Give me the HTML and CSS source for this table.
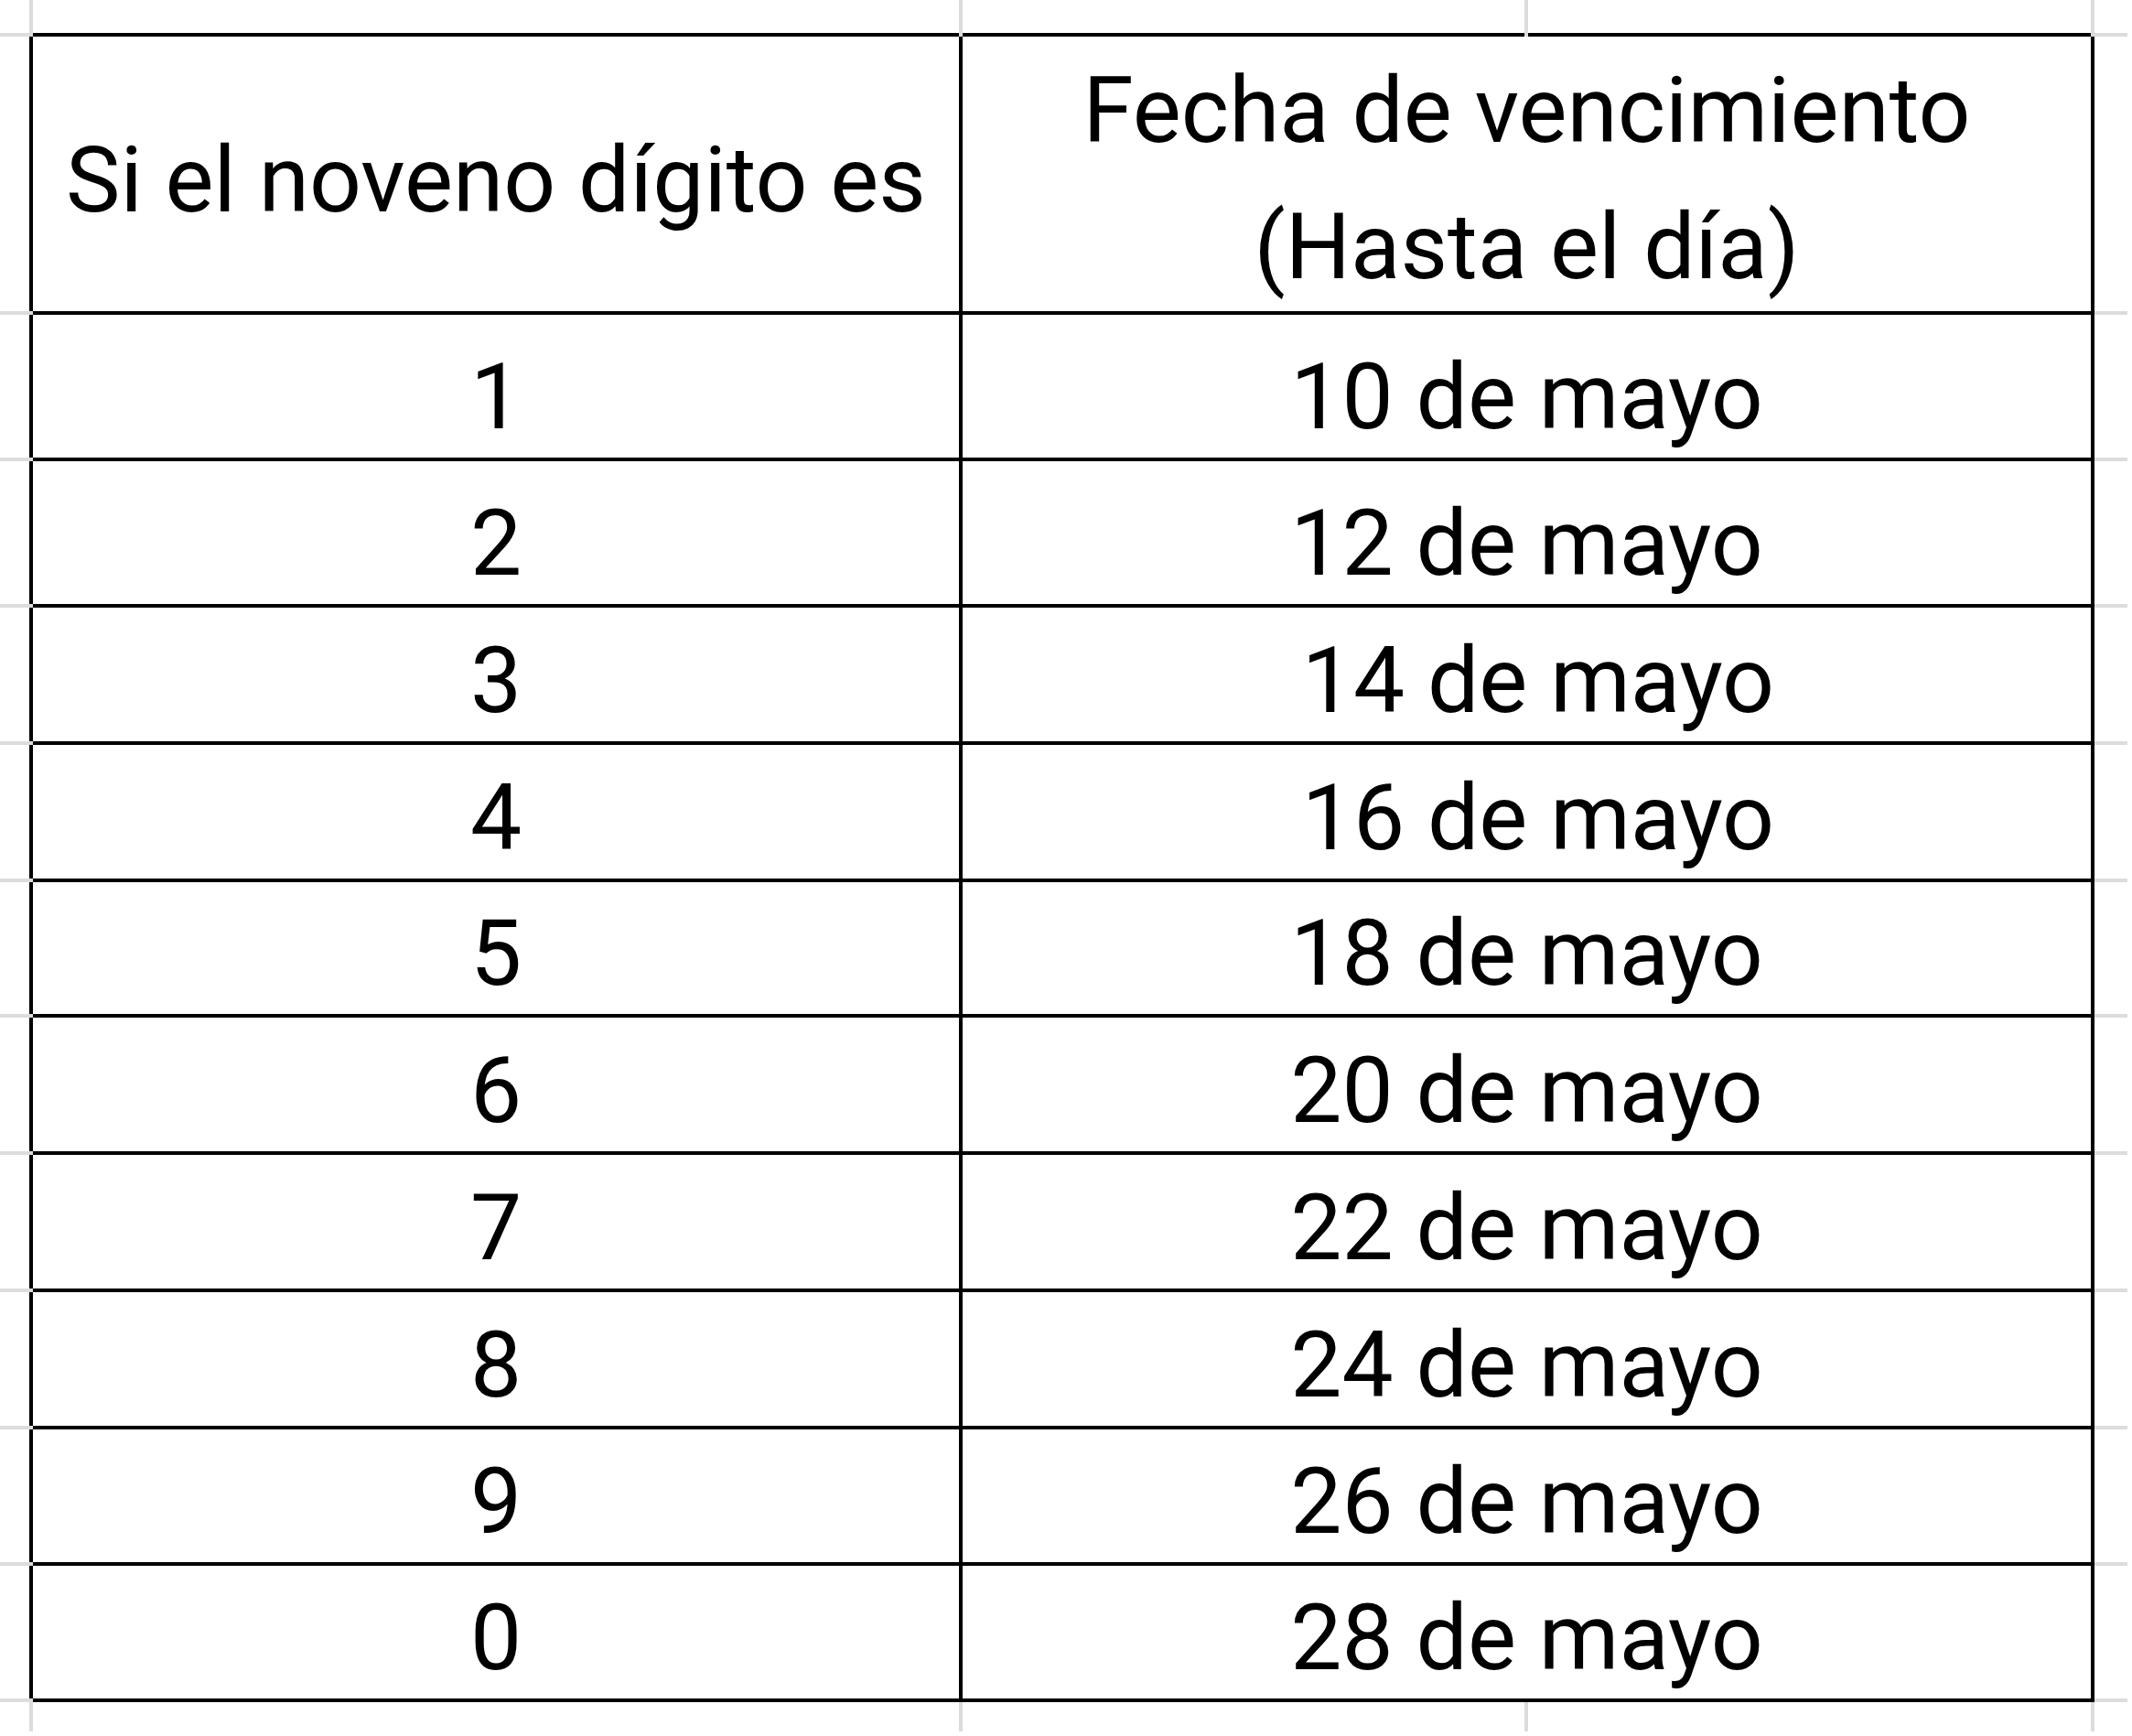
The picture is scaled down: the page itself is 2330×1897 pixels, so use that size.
FILE: index.html
```html
<!DOCTYPE html>
<html lang="es">
<head>
<meta charset="utf-8">
<title>Fechas de vencimiento</title>
<link rel="stylesheet" href="styles.css">
</head>
<body>
<table class="sheet">
  <colgroup>
    <col class="col-gutter">
    <col class="col-a">
    <col class="col-b">
    <col class="col-c">
    <col class="col-gutter-r">
  </colgroup>
  <tr class="row-edge-top">
    <td class="stub"></td><td class="grid-v"></td><td class="grid-v"></td><td class="grid-v grid-v-last"></td><td class="stub"></td>
  </tr>
  <tr class="row-head">
    <td class="stub"></td>
    <td class="cell head-a">Si el noveno dígito es</td>
    <td class="cell head-b" colspan="2"><div class="head-lines">Fecha de vencimiento<br>(Hasta el día)</div></td>
    <td class="stub"></td>
  </tr>
  <tr class="row-tall"><td class="stub"></td><td class="cell">1</td><td class="cell" colspan="2">10 de mayo</td><td class="stub"></td></tr>
  <tr class="row-tall"><td class="stub"></td><td class="cell">2</td><td class="cell" colspan="2">12 de mayo</td><td class="stub"></td></tr>
  <tr class="row-150"><td class="stub"></td><td class="cell">3</td><td class="cell" colspan="2"> 14 de mayo</td><td class="stub"></td></tr>
  <tr class="row-150"><td class="stub"></td><td class="cell">4</td><td class="cell" colspan="2"> 16 de mayo</td><td class="stub"></td></tr>
  <tr class="row-148"><td class="stub"></td><td class="cell">5</td><td class="cell" colspan="2">18 de mayo</td><td class="stub"></td></tr>
  <tr class="row-150"><td class="stub"></td><td class="cell">6</td><td class="cell" colspan="2">20 de mayo</td><td class="stub"></td></tr>
  <tr class="row-150"><td class="stub"></td><td class="cell">7</td><td class="cell" colspan="2">22 de mayo</td><td class="stub"></td></tr>
  <tr class="row-150"><td class="stub"></td><td class="cell">8</td><td class="cell" colspan="2">24 de mayo</td><td class="stub"></td></tr>
  <tr class="row-149"><td class="stub"></td><td class="cell">9</td><td class="cell" colspan="2">26 de mayo</td><td class="stub"></td></tr>
  <tr class="row-149"><td class="stub"></td><td class="cell">0</td><td class="cell" colspan="2">28 de mayo</td><td class="stub"></td></tr>
  <tr class="row-edge-bottom">
    <td></td><td class="grid-v"></td><td class="grid-v"></td><td class="grid-v grid-v-last"></td><td></td>
  </tr>
</table>
</body>
</html>
```
FILE: styles.css
```css
html, body {
  margin: 0;
  padding: 0;
  background: #ffffff;
}

.sheet {
  border-collapse: collapse;
  table-layout: fixed;
  width: 2325px;
  font-family: Roboto, "Liberation Sans", sans-serif;
  font-size: 100px;
  color: #000000;
}

.col-gutter { width: 34px; }
.col-a { width: 1016px; }
.col-b { width: 618px; }
.col-c { width: 619px; }
.col-gutter-r { width: 38px; }

.sheet td {
  padding: 0;
}

/* spreadsheet gridlines outside the bordered table */
.stub {
  border-bottom: 4px solid #dcdcdc;
}
.row-edge-top .stub {
  border-bottom: 4px solid #dcdcdc;
}
.grid-v {
  border-left: 4px solid #dcdcdc;
}
.grid-v-last {
  border-right: 4px solid #dcdcdc;
}

.row-edge-top { height: 38px; }
.row-head { height: 304px; }
.row-tall { height: 160px; }
.row-150 { height: 150px; }
.row-149 { height: 149px; }
.row-148 { height: 148px; }
.row-edge-bottom { height: 34px; }

.cell {
  border: 4px solid #000000;
  text-align: center;
  vertical-align: bottom;
  white-space: pre;
  line-height: normal;
  padding-bottom: 8px !important;
}

.head-a {
  vertical-align: middle;
  padding-top: 12px !important;
  padding-bottom: 0 !important;
}

.head-b {
  vertical-align: top;
  padding-bottom: 0 !important;
}

.head-lines {
  line-height: 149px;
  margin: 6px 0 -4px;
}
```
